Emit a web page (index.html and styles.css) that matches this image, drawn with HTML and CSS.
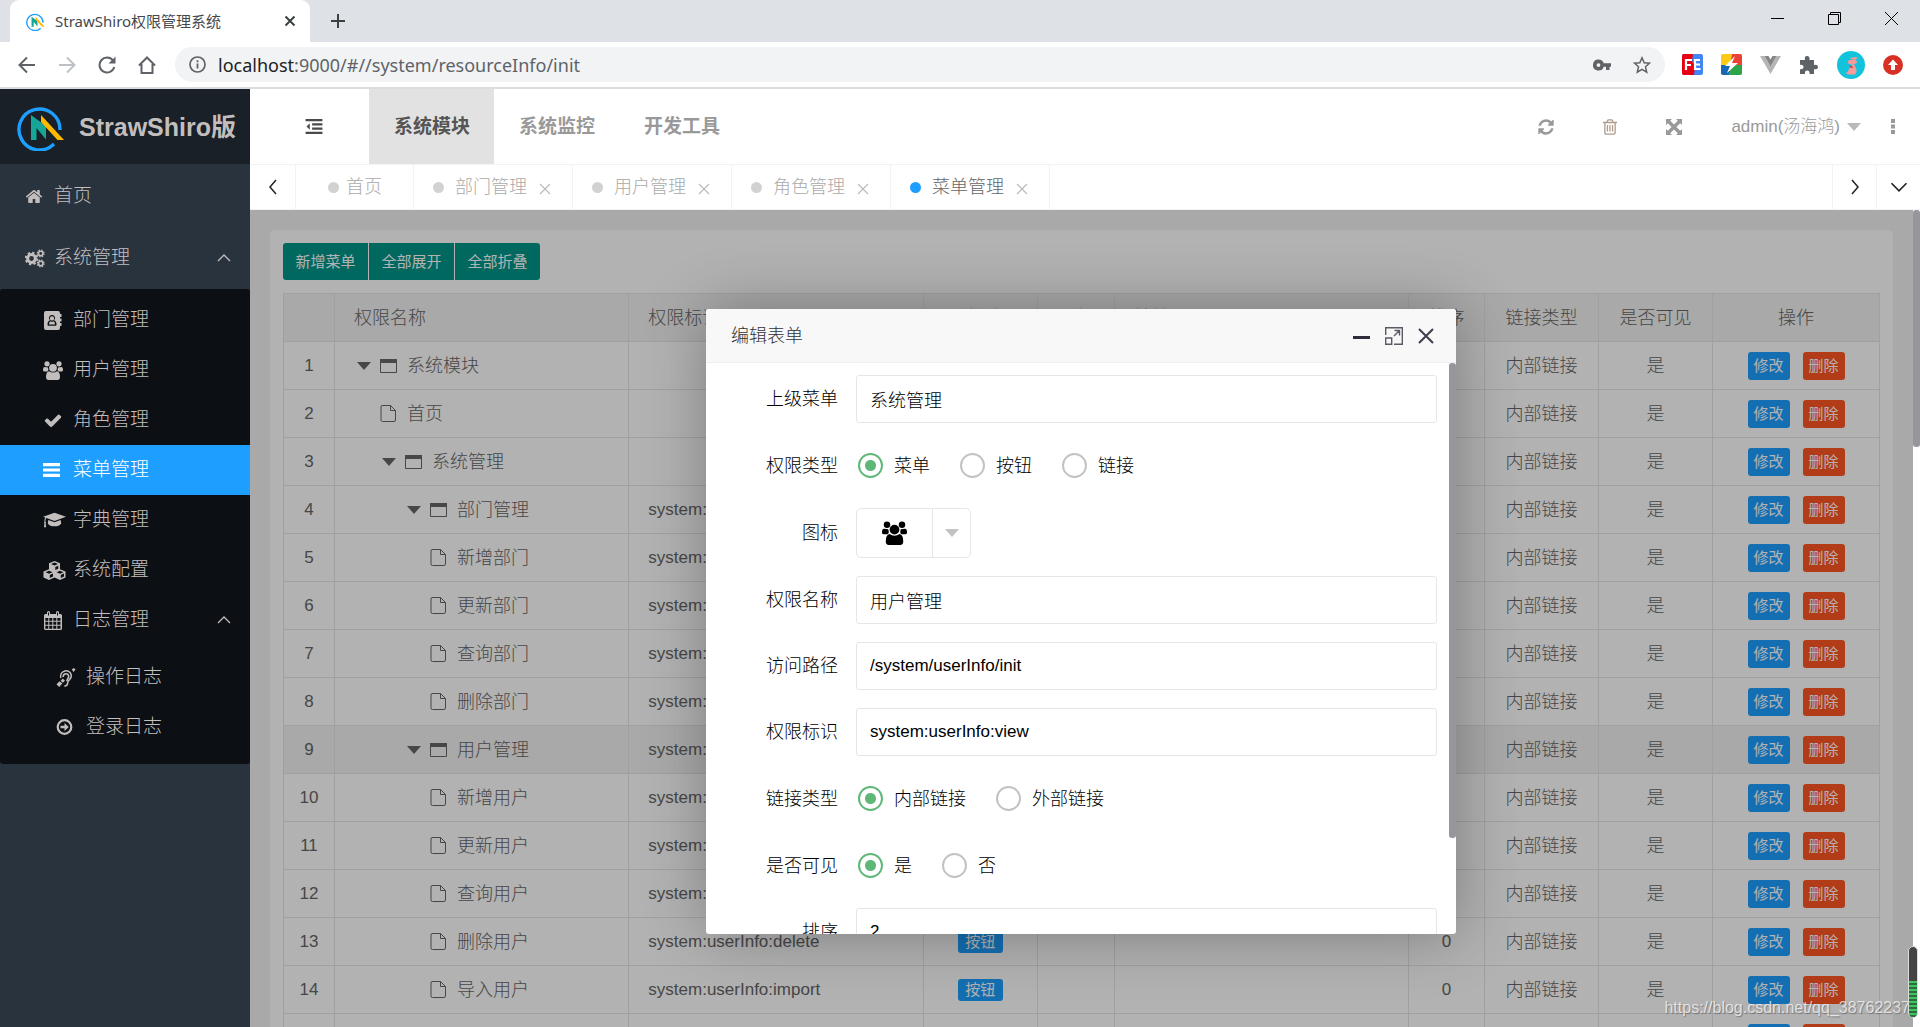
FILE: index.html
```html
<!DOCTYPE html>
<html lang="zh-CN">
<head>
<meta charset="utf-8">
<title>StrawShiro权限管理系统</title>
<link rel="stylesheet" href="styles.css">
</head>
<body>
<svg class="sprite" aria-hidden="true">
  <symbol id="logo" viewBox="0 0 48 48">
    <path d="M37 41A20.500 20.500 0 1 1 43 27" fill="none" stroke="#1e9fff" stroke-width="3.400"/>
    <path d="M14 12v25h5.500V25L29 36.500V23z" fill="#16a596"/>
    <path d="M24 12v7l16.500 18H47z" fill="#ffb800"/>
  </symbol>
  <symbol id="home" viewBox="0 0 1792 1792"><path d="M1472 992v480q0 26-19 45t-45 19h-384v-384h-256v384h-384q-26 0-45-19t-19-45v-480q0-1 .5-3t.5-3l575-474 575 474q1 2 1 6zm223-69l-62 74q-8 9-21 11h-3q-13 0-21-7l-692-577-692 577q-12 8-24 7-13-2-21-11l-62-74q-8-10-7-23.500t11-21.500l719-599q32-26 76-26t76 26l244 204v-195q0-14 9-23t23-9h192q14 0 23 9t9 23v408l219 182q10 8 11 21.500t-7 23.500z"/></symbol>
  <symbol id="check" viewBox="0 0 1792 1792"><path d="M1671 566q0 40-28 68l-724 724-136 136q-28 28-68 28t-68-28l-136-136-362-362q-28-28-28-68t28-68l136-136q28-28 68-28t68 28l294 295 656-657q28-28 68-28t68 28l136 136q28 28 28 68z"/></symbol>
  <symbol id="refresh" viewBox="0 0 1792 1792"><path d="M1639 1056q0 5-1 7-64 268-268 434.500t-478 166.500q-146 0-282.500-55t-243.500-157l-129 129q-19 19-45 19t-45-19-19-45v-448q0-26 19-45t45-19h448q26 0 45 19t19 45-19 45l-137 137q71 66 161 102t187 36q134 0 250-65t186-179q11-17 53-117 8-23 30-23h192q13 0 22.500 9.500t9.500 22.500zm25-800v448q0 26-19 45t-45 19h-448q-26 0-45-19t-19-45 19-45l138-138q-148-137-349-137-134 0-250 65t-186 179q-11 17-53 117-8 23-30 23h-199q-13 0-22.500-9.500t-9.500-22.500v-7q65-268 270-434.500t480-166.500q146 0 284 55.500t245 156.500l130-129q19-19 45-19t45 19 19 45z"/></symbol>
  <symbol id="trash" viewBox="0 0 1792 1792"><path d="M704 736v576q0 14-9 23t-23 9h-64q-14 0-23-9t-9-23v-576q0-14 9-23t23-9h64q14 0 23 9t9 23zm256 0v576q0 14-9 23t-23 9h-64q-14 0-23-9t-9-23v-576q0-14 9-23t23-9h64q14 0 23 9t9 23zm256 0v576q0 14-9 23t-23 9h-64q-14 0-23-9t-9-23v-576q0-14 9-23t23-9h64q14 0 23 9t9 23zm128 724v-948h-896v948q0 22 7 40.500t14.500 27 10.500 8.500h832q3 0 10.500-8.500t14.500-27 7-40.500zm-672-1076h448l-48-117q-7-9-17-11h-317q-10 2-17 11zm928 32v64q0 14-9 23t-23 9h-96v948q0 83-47 143.500t-113 60.500h-832q-66 0-113-58.500t-47-141.500v-952h-96q-14 0-23-9t-9-23v-64q0-14 9-23t23-9h309l70-167q15-37 54-63t79-26h320q40 0 79 26t54 63l70 167h309q14 0 23 9t9 23z"/></symbol>
  <symbol id="arrows" viewBox="0 0 16 16"><path d="M0 0h6L4.200 1.800 8 5.600l3.800-3.800L10 0h6v6l-1.800-1.800L10.400 8l3.800 3.800L16 10v6h-6l1.800-1.800L8 10.400l-3.800 3.800L6 16H0v-6l1.800 1.800L5.600 8 1.800 4.200 0 6z"/></symbol>
  <symbol id="outdent" viewBox="0 0 18 16"><path d="M0 0h18v2.500H0zM7 4.500h11V7H7zM7 9h11v2.500H7zM0 13.500h18V16H0zM4.500 4.500v7L1 8z"/></symbol>
  <symbol id="bars" viewBox="0 0 16 13"><path d="M0 0h16v3H0zM0 5h16v3H0zM0 10h16v3H0z"/></symbol>
  <symbol id="cogs" viewBox="0 0 20 18"><g fill="none" stroke="currentColor"><circle cx="6.500" cy="9" r="3.900" stroke-width="3"/><circle cx="6.500" cy="9" r="5.800" stroke-width="2" stroke-dasharray="2.300 2.255"/><circle cx="15.700" cy="4" r="2.200" stroke-width="1.600"/><circle cx="15.700" cy="4" r="3.400" stroke-width="1.200" stroke-dasharray="1.500 1.170"/><circle cx="15.700" cy="14" r="2.200" stroke-width="1.600"/><circle cx="15.700" cy="14" r="3.400" stroke-width="1.200" stroke-dasharray="1.500 1.170"/></g></symbol>
  <symbol id="book" viewBox="0 0 18 19"><path fill-rule="evenodd" d="M2 0h12q2 0 2 2v1h1.500v3H16v1.500h1.500v3H16V12h1.500v3H16v2q0 2-2 2H2q-2 0-2-2V2q0-2 2-2zm6 4a3 3 0 0 0-2 5.300C4 10 3.500 11.500 3.500 14q0 .8 1 .8h7q1 0 1-.8c0-2.500-.5-4-2.500-4.700A3 3 0 0 0 8 4zm0 1.200a2.200 2.200 0 1 1 0 4.400 2.200 2.200 0 0 1 0-4.400z"/><path d="M5 13.500q0-2.800 1.500-3.300 1.500 1 3 0 1.500.5 1.500 3.300z"/></symbol>
  <symbol id="users" viewBox="0 0 20 19"><circle cx="4" cy="2.800" r="2.600"/><circle cx="16" cy="2.800" r="2.600"/><path d="M1.500 6q-1.500 0-1.500 3 0 1.500 1.500 1.500h3Q6 9.500 5 6.500 3.500 6.300 1.500 6zM18.500 6Q20 6 20 9q0 1.500-1.500 1.500h-3Q14 9.500 15 6.500q1.500-.2 3.500-.5z"/><circle cx="10" cy="6.800" r="3.900"/><path d="M6 10.300q4 2.600 8 0 3 .7 3 5.700 0 3-2.500 3h-9Q3 19 3 16q0-5 3-5.700z"/></symbol>
  <symbol id="grad" viewBox="0 0 24 16"><path d="M12 0l12 4-12 4.500L3.500 5.300Q2.500 6 2.500 9q1 .8.300 1.800L3.300 15H1l.5-4.200Q.8 9.800 1.500 9q0-3 .8-4.200L0 4zM5.500 7.400L12 9.900l6.500-2.500L19 11q-2 3-7 3t-7-3z"/></symbol>
  <symbol id="cubes" viewBox="0 0 23 19"><path fill-rule="evenodd" d="M11.500 0L17 2.300v6l5.500 2.300v5.800L17 19l-5.500-2.400L6 19 .5 16.400v-5.800L6 8.300v-6zm0 1.600L8 3l3.500 1.500L15 3zM12.300 6v3l3-1.300V4.700zM6 9.800l-3.500 1.400L6 12.700l3.500-1.500zM6.800 14v3l3.200-1.400v-3zM17 9.800l-3.500 1.400 3.500 1.500 3.500-1.500zM17.800 14v3l3.200-1.400v-3z"/></symbol>
  <symbol id="calendar" viewBox="0 0 18 19"><path fill-rule="evenodd" d="M1.500 3H3V1.500Q3 0 4.500 0T6 1.500V3h6V1.500Q12 0 13.500 0T15 1.500V3h1.500Q18 3 18 4.500v13q0 1.500-1.500 1.500h-15Q0 19 0 17.500v-13Q0 3 1.500 3zM4 1.500v3h1v-3zm9 0v3h1v-3zM1.300 7v2.700h3V7zm4 0v2.700h3V7zm4 0v2.700h3V7zm4 0v2.700h3.200V7zm-12 3.700v3h3v-3zm4 0v3h3v-3zm4 0v3h3v-3zm4 0v3h3.200v-3zm-12 4v3h3v-3zm4 0v3h3v-3zm4 0v3h3v-3zm4 0v3h3.200v-3z"/></symbol>
  <symbol id="deaf" viewBox="0 0 18 18"><g fill="none" stroke="currentColor" stroke-width="1.500"><path d="M4 9.500C2.500 2 13 0 14 7c.5 4-3.500 4-3.500 7.500q0 2.500-3 2.700M6.300 8.500c0-4 5.200-4 5.200-.5 0 2-1.500 2-1.700 4.500"/></g><path d="M14.500 1.500L16.500 0 18 1.500l-2 2.200zM0 15.500l3-3 2.500 2.300L2.500 18zM4 12l2-2 2 2-2 2z"/></symbol>
  <symbol id="goto" viewBox="0 0 16 16"><circle cx="8" cy="8" r="6.800" fill="none" stroke="currentColor" stroke-width="2.200"/><path d="M4 6.700h4V4l4.300 4L8 12V9.300H4z"/></symbol>
  <symbol id="up" viewBox="0 0 14 8"><path d="M1 7l6-6 6 6" fill="none" stroke="currentColor" stroke-width="1.300"/></symbol>
  <symbol id="left" viewBox="0 0 8 16"><path d="M7 1L1 8l6 7" fill="none" stroke="currentColor" stroke-width="1.500"/></symbol>
  <symbol id="cross" viewBox="0 0 12 12"><path d="M1 1l10 10M11 1L1 11" fill="none" stroke="currentColor" stroke-width="1.200"/></symbol>
  <symbol id="caret" viewBox="0 0 14 8"><path d="M0 0h14L7 8z"/></symbol>
  <symbol id="win" viewBox="0 0 17 14"><path d="M.5.500h16v13H.5z" fill="none" stroke="currentColor"/><path d="M0 0h17v4H0z"/></symbol>
  <symbol id="doc" viewBox="0 0 17 17"><path d="M2 .5h8.500l5 5V15q0 1.500-1.500 1.500H2.500Q1 16.500 1 15V2Q1 .5 2 .5zM10.500.500v5h5" fill="none" stroke="currentColor"/></symbol>
</svg>

<header class="browser">
  <div class="tabstrip">
    <div class="browser-tab">
      <svg class="favicon"><use href="#logo"/></svg>
      <span class="browser-title">StrawShiro权限管理系统</span>
      <button class="plain" aria-label="关闭标签页"><svg width="12" height="12" viewBox="0 0 12 12"><path d="M1.500 1.500l9 9M10.500 1.500l-9 9" stroke="#3c4043" stroke-width="2"/></svg></button>
    </div>
    <button class="plain new-tab" aria-label="新标签页"><svg width="16" height="16" viewBox="0 0 16 16"><path d="M8 1v14M1 8h14" stroke="#3c4043" stroke-width="2"/></svg></button>
    <div class="window-buttons">
      <button class="plain" aria-label="最小化"><svg width="13" height="13" viewBox="0 0 13 13"><path d="M0 6.500h13" stroke="#000"/></svg></button>
      <button class="plain" aria-label="还原"><svg width="13" height="13" viewBox="0 0 13 13"><path d="M.5 2.500h10v10H.5zM2.500 2V.500h10v10H11" fill="none" stroke="#000"/></svg></button>
      <button class="plain" aria-label="关闭"><svg width="13" height="13" viewBox="0 0 13 13"><path d="M0 0l13 13M13 0L0 13" stroke="#000"/></svg></button>
    </div>
  </div>
  <div class="toolbar">
    <div class="nav-buttons">
      <button class="plain" aria-label="后退"><svg width="18" height="18" viewBox="0 0 18 18"><path d="M17 9H2M9 1.500L1.500 9 9 16.500" fill="none" stroke="#5f6368" stroke-width="2"/></svg></button>
      <button class="plain" aria-label="前进"><svg width="18" height="18" viewBox="0 0 18 18"><path d="M1 9h15M9 1.500L16.500 9 9 16.500" fill="none" stroke="#bdc1c6" stroke-width="2"/></svg></button>
      <button class="plain" aria-label="刷新"><svg width="18" height="18" viewBox="0 0 18 18"><path d="M15 4.500A7.500 7.500 0 1 0 16.300 11" fill="none" stroke="#5f6368" stroke-width="2"/><path d="M17.500.500v7h-7z" fill="#5f6368"/></svg></button>
      <button class="plain" aria-label="主页"><svg width="18" height="18" viewBox="0 0 18 18"><path d="M1 9.500L9 1.500l8 8M3.500 8v9h11V8" fill="none" stroke="#5f6368" stroke-width="2"/></svg></button>
    </div>
    <div class="address">
      <svg width="17" height="17" viewBox="0 0 17 17"><circle cx="8.500" cy="8.500" r="7.500" fill="none" stroke="#5f6368" stroke-width="1.700"/><path d="M7.600 7.500h1.800v5H7.600zM7.600 4.300h1.800v1.900H7.600z" fill="#5f6368"/></svg>
      <span class="url"><b>localhost</b>:9000/#//system/resourceInfo/init</span>
      <svg width="18" height="12" viewBox="0 0 18 12"><path fill="#5f6368" fill-rule="evenodd" d="M5.500.5a5.500 5.500 0 0 1 5.200 3.700H18v3.500h-1.500V11H13V7.700h-2.300A5.500 5.500 0 1 1 5.500.500zm0 3.700a1.900 1.900 0 1 0 0 3.800 1.900 1.900 0 0 0 0-3.800z"/></svg>
      <svg width="18" height="18" viewBox="0 0 18 18"><path d="M9 1.800l2.200 4.900 5.300.5-4 3.600 1.200 5.300L9 13.300l-4.700 2.800 1.200-5.300-4-3.600 5.300-.5z" fill="none" stroke="#5f6368" stroke-width="1.500"/></svg>
    </div>
    <div class="extensions">
      <svg width="21" height="21" viewBox="0 0 21 21"><rect width="21" height="21" rx="2" fill="#4285f4"/><path d="M2 0h9l-1 7 3 5-1 9H2q-2 0-2-2V2q0-2 2-2z" fill="#e60012"/><path d="M4 16V6h6M4 11h5M18 6h-5v9h5.500M13 10.500h5" fill="none" stroke="#fff" stroke-width="2.200"/></svg>
      <svg width="21" height="21" viewBox="0 0 21 21"><rect width="21" height="21" rx="2" fill="#fbc916"/><path d="M11 0h8q2 0 2 2v9H9z" fill="#ea4335"/><path d="M0 11h11l-3 10H2q-2 0-2-2z" fill="#1769b5"/><path d="M11 11h10v8q0 2-2 2H8z" fill="#2ca44a"/><path d="M14 2L4 12h5l-3 7 11-10h-6z" fill="#fff"/></svg>
      <svg width="21" height="18" viewBox="0 0 21 18"><path d="M0 0h4.500l6 10.500L16.500 0H21L10.500 18z" fill="#b5b5b5"/><path d="M4.500 0h4l2 3.500 2-3.500h4l-6 10.500z" fill="#858585"/></svg>
      <svg width="20" height="20" viewBox="0 0 20 20"><path d="M1 5h5q-1-4 2-4t2.500 4H15v5q4-.7 4 2t-4 2.300V19h-4.500q.5-3.500-2.300-3.500T6 19H1v-4.800q3.500.3 3.500-2.200T1 9.800z" fill="#5f6368"/></svg>
      <svg width="28" height="28" viewBox="0 0 28 28"><circle cx="14" cy="14" r="14" fill="#12c3dc"/><path d="M21 6q-6-.5-8.500 1.500L17 8.500q-6 0-6.500 2.500.5 2 3.500 2.500l2 .5q-4 2-4.500 5.500-1.500 2.500-3 2.500l2.500 1.500h7q3-3 0-8.500l-1-2q3-.5 3-2.500l-2-2 3.500-1-3-.3z" fill="#f69a9a"/><path d="M12 14.500l4.500 1.500-2.500 1z" fill="#a33"/></svg>
      <svg width="20" height="20" viewBox="0 0 20 20"><circle cx="10" cy="10" r="10" fill="#d93025"/><path d="M10 4.500L5 10h3v5h4v-5h3z" fill="#fff"/></svg>
    </div>
  </div>
</header>

<div class="app">
  <aside class="sidebar">
    <div class="brand"><svg width="48" height="48"><use href="#logo"/></svg><span>StrawShiro版</span></div>
    <nav>
      <a class="item" href="#home"><svg class="ico-home"><use href="#home"/></svg><span>首页</span></a>
      <a class="item" href="#sys"><svg><use href="#cogs"/></svg><span>系统管理</span><svg class="fold"><use href="#up"/></svg></a>
      <div class="submenu">
        <a class="item" href="#dept"><svg><use href="#book"/></svg><span>部门管理</span></a>
        <a class="item" href="#user"><svg><use href="#users"/></svg><span>用户管理</span></a>
        <a class="item" href="#role"><svg><use href="#check"/></svg><span>角色管理</span></a>
        <a class="item active" href="#menu"><svg class="ico-bars"><use href="#bars"/></svg><span>菜单管理</span></a>
        <a class="item" href="#dict"><svg class="ico-wide"><use href="#grad"/></svg><span>字典管理</span></a>
        <a class="item" href="#conf"><svg class="ico-wide"><use href="#cubes"/></svg><span>系统配置</span></a>
        <a class="item" href="#log"><svg><use href="#calendar"/></svg><span>日志管理</span><svg class="fold"><use href="#up"/></svg></a>
        <div class="submenu2">
          <a class="item" href="#op"><svg><use href="#deaf"/></svg><span>操作日志</span></a>
          <a class="item" href="#login"><svg class="ico-bars"><use href="#goto"/></svg><span>登录日志</span></a>
        </div>
      </div>
    </nav>
  </aside>

  <div class="main">
    <div class="topbar">
      <button class="plain collapse" aria-label="收起菜单"><svg width="18" height="15"><use href="#outdent"/></svg></button>
      <nav class="modules">
        <a class="on" href="#m1">系统模块</a><a href="#m2">系统监控</a><a href="#m3">开发工具</a>
      </nav>
      <div class="tools">
        <button class="plain tool" aria-label="刷新页面"><svg width="18" height="18"><use href="#refresh"/></svg></button>
        <button class="plain tool trash" aria-label="清除缓存"><svg width="18" height="18"><use href="#trash"/></svg></button>
        <button class="plain tool" aria-label="全屏"><svg width="16" height="16"><use href="#arrows"/></svg></button>
        <button class="plain account"><span>admin(汤海鸿)</span><svg width="14" height="8"><use href="#caret"/></svg></button>
        <button class="plain more" aria-label="更多"><svg width="4" height="15" viewBox="0 0 4 15"><path d="M0 0h4v4H0zM0 5.500h4v4H0zM0 11h4v4H0z"/></svg></button>
      </div>
    </div>
    <div class="pagetabs">
      <button class="plain end" aria-label="向左"><svg width="8" height="16"><use href="#left"/></svg></button>
      <a class="ptab first" href="#t1"><i></i><span>首页</span></a>
      <a class="ptab" href="#t2"><i></i><span>部门管理</span><svg><use href="#cross"/></svg></a>
      <a class="ptab" href="#t3"><i></i><span>用户管理</span><svg><use href="#cross"/></svg></a>
      <a class="ptab" href="#t4"><i></i><span>角色管理</span><svg><use href="#cross"/></svg></a>
      <a class="ptab current" href="#t5"><i></i><span>菜单管理</span><svg><use href="#cross"/></svg></a>
      <span class="spacer"></span>
      <button class="plain end" aria-label="向右"><svg class="flip" width="8" height="16"><use href="#left"/></svg></button>
      <button class="plain end" aria-label="页签操作"><svg class="flip" width="18" height="10"><use href="#up"/></svg></button>
    </div>

    <div class="frame">
      <div class="page">
        <div class="card">
          <div class="actions"><button>新增菜单</button><button>全部展开</button><button>全部折叠</button></div>
          <table>
            <colgroup><col class="c-no"><col><col><col class="c-type"><col class="c-icon"><col><col class="c-sort"><col class="c-link"><col class="c-link"><col class="c-ops"></colgroup>
            <thead><tr><th></th><th class="l">权限名称</th><th class="l">权限标识</th><th>类型</th><th>图标</th><th class="l">地址</th><th>排序</th><th>链接类型</th><th>是否可见</th><th>操作</th></tr></thead>
            <tbody>
              <tr><td>1</td><td class="name"><div><svg class="tri"><use href="#caret"/></svg><svg class="win"><use href="#win"/></svg>系统模块</div></td><td class="l"></td><td></td><td></td><td></td><td></td><td>内部链接</td><td>是</td><td class="ops"><button class="edit">修改</button><button class="del">删除</button></td></tr>
              <tr><td>2</td><td class="name leaf"><div><svg class="doc"><use href="#doc"/></svg>首页</div></td><td class="l"></td><td></td><td></td><td></td><td></td><td>内部链接</td><td>是</td><td class="ops"><button class="edit">修改</button><button class="del">删除</button></td></tr>
              <tr><td>3</td><td class="name d1"><div><svg class="tri"><use href="#caret"/></svg><svg class="win"><use href="#win"/></svg>系统管理</div></td><td class="l"></td><td></td><td></td><td></td><td></td><td>内部链接</td><td>是</td><td class="ops"><button class="edit">修改</button><button class="del">删除</button></td></tr>
              <tr><td>4</td><td class="name d2"><div><svg class="tri"><use href="#caret"/></svg><svg class="win"><use href="#win"/></svg>部门管理</div></td><td class="l">system:</td><td></td><td></td><td></td><td></td><td>内部链接</td><td>是</td><td class="ops"><button class="edit">修改</button><button class="del">删除</button></td></tr>
              <tr><td>5</td><td class="name leaf d2"><div><svg class="doc"><use href="#doc"/></svg>新增部门</div></td><td class="l">system:</td><td></td><td></td><td></td><td></td><td>内部链接</td><td>是</td><td class="ops"><button class="edit">修改</button><button class="del">删除</button></td></tr>
              <tr><td>6</td><td class="name leaf d2"><div><svg class="doc"><use href="#doc"/></svg>更新部门</div></td><td class="l">system:</td><td></td><td></td><td></td><td></td><td>内部链接</td><td>是</td><td class="ops"><button class="edit">修改</button><button class="del">删除</button></td></tr>
              <tr><td>7</td><td class="name leaf d2"><div><svg class="doc"><use href="#doc"/></svg>查询部门</div></td><td class="l">system:</td><td></td><td></td><td></td><td></td><td>内部链接</td><td>是</td><td class="ops"><button class="edit">修改</button><button class="del">删除</button></td></tr>
              <tr><td>8</td><td class="name leaf d2"><div><svg class="doc"><use href="#doc"/></svg>删除部门</div></td><td class="l">system:</td><td></td><td></td><td></td><td></td><td>内部链接</td><td>是</td><td class="ops"><button class="edit">修改</button><button class="del">删除</button></td></tr>
              <tr class="hover"><td>9</td><td class="name d2"><div><svg class="tri"><use href="#caret"/></svg><svg class="win"><use href="#win"/></svg>用户管理</div></td><td class="l">system:</td><td></td><td></td><td></td><td></td><td>内部链接</td><td>是</td><td class="ops"><button class="edit">修改</button><button class="del">删除</button></td></tr>
              <tr><td>10</td><td class="name leaf d2"><div><svg class="doc"><use href="#doc"/></svg>新增用户</div></td><td class="l">system:</td><td></td><td></td><td></td><td></td><td>内部链接</td><td>是</td><td class="ops"><button class="edit">修改</button><button class="del">删除</button></td></tr>
              <tr><td>11</td><td class="name leaf d2"><div><svg class="doc"><use href="#doc"/></svg>更新用户</div></td><td class="l">system:</td><td></td><td></td><td></td><td></td><td>内部链接</td><td>是</td><td class="ops"><button class="edit">修改</button><button class="del">删除</button></td></tr>
              <tr><td>12</td><td class="name leaf d2"><div><svg class="doc"><use href="#doc"/></svg>查询用户</div></td><td class="l">system:</td><td></td><td></td><td></td><td></td><td>内部链接</td><td>是</td><td class="ops"><button class="edit">修改</button><button class="del">删除</button></td></tr>
              <tr><td>13</td><td class="name leaf d2"><div><svg class="doc"><use href="#doc"/></svg>删除用户</div></td><td class="l">system:userInfo:delete</td><td><span class="badge">按钮</span></td><td></td><td></td><td>0</td><td>内部链接</td><td>是</td><td class="ops"><button class="edit">修改</button><button class="del">删除</button></td></tr>
              <tr><td>14</td><td class="name leaf d2"><div><svg class="doc"><use href="#doc"/></svg>导入用户</div></td><td class="l">system:userInfo:import</td><td><span class="badge">按钮</span></td><td></td><td></td><td>0</td><td>内部链接</td><td>是</td><td class="ops"><button class="edit">修改</button><button class="del">删除</button></td></tr>
              <tr><td></td><td></td><td></td><td></td><td></td><td></td><td></td><td></td><td></td><td class="ops"><button class="edit">修改</button><button class="del">删除</button></td></tr>
            </tbody>
          </table>
        </div>
        <div class="shade">
          <section class="dialog" role="dialog" aria-label="编辑表单">
            <div class="dialog-head">
              <h2>编辑表单</h2>
              <button class="plain" aria-label="最小化窗口"><svg width="17" height="18" viewBox="0 0 17 18"><path d="M0 10.500h17" stroke="#2e2d3c" stroke-width="3"/></svg></button>
              <button class="plain" aria-label="最大化窗口"><svg width="18" height="18" viewBox="0 0 18 18"><path d="M.7 8V.7h16.600v16.600H9M.7 11h6v6.300h-6zM9 9l5.500-5.500M9.500 3.500h5v5" fill="none" stroke="#5a5966" stroke-width="1.400"/></svg></button>
              <button class="plain" aria-label="关闭窗口"><svg width="16" height="16" viewBox="0 0 16 16"><path d="M1 1l14 14M15 1L1 15" stroke="#3e3d4c" stroke-width="2"/></svg></button>
            </div>
            <form class="dialog-body">
              <div class="row"><label for="f1">上级菜单</label><input id="f1" type="text" value="系统管理"></div>
              <div class="row choice"><span class="label">权限类型</span><label><input type="radio" name="type" checked>菜单</label><label><input type="radio" name="type">按钮</label><label><input type="radio" name="type">链接</label></div>
              <div class="row pick"><span class="label">图标</span><button type="button" class="picker" aria-label="选择图标"><span><svg width="25" height="24"><use href="#users"/></svg></span><span class="drop"><svg width="14" height="8"><use href="#caret"/></svg></span></button></div>
              <div class="row"><label for="f2">权限名称</label><input id="f2" type="text" value="用户管理"></div>
              <div class="row"><label for="f3">访问路径</label><input id="f3" type="text" value="/system/userInfo/init"></div>
              <div class="row"><label for="f4">权限标识</label><input id="f4" type="text" value="system:userInfo:view"></div>
              <div class="row choice"><span class="label">链接类型</span><label><input type="radio" name="link" checked>内部链接</label><label><input type="radio" name="link">外部链接</label></div>
              <div class="row choice"><span class="label">是否可见</span><label><input type="radio" name="show" checked>是</label><label><input type="radio" name="show">否</label></div>
              <div class="row"><label for="f5">排序</label><input id="f5" type="text" value="2"></div>
            </form>
            <div class="dialog-thumb"></div>
          </section>
        </div>
      </div>
      <div class="rail"><div class="thumb"></div></div>
    </div>
  </div>
</div>
<div class="watermark">https://blog.csdn.net/qq_38762237</div>
<div class="meter"><div></div></div>
</body>
</html>
```

FILE: styles.css
```css
* { box-sizing: border-box; }
body {
  margin: 0;
  height: 100vh;
  overflow: hidden;
  display: flex;
  flex-direction: column;
  position: relative;
  font: 300 18px/24px "Liberation Sans", "Noto Sans CJK SC", sans-serif;
  color: #666;
  background: #fff;
}
a { color: inherit; text-decoration: none; }
button, input { font: inherit; color: inherit; }
svg { display: block; flex: none; fill: currentColor; }
.sprite { position: absolute; width: 0; height: 0; }
.plain { border: 0; padding: 0; background: none; display: flex; align-items: center; justify-content: center; }

/* browser window */
.browser { flex: none; border-bottom: 2px solid #dadce0; font-family: "Noto Sans", "Noto Sans CJK SC", sans-serif; }
.tabstrip { height: 42px; background: #dee1e6; display: flex; padding-left: 10px; }
.browser-tab { width: 300px; height: 42px; padding: 0 14px 0 16px; background: #fff; border-radius: 9px 9px 0 0; display: flex; align-items: center; gap: 10px; }
.favicon { width: 19px; height: 19px; }
.browser-title { flex: 1; font-size: 15px; font-weight: 400; color: #45494d; white-space: nowrap; }
.new-tab { width: 56px; }
.window-buttons { margin-left: auto; display: flex; align-items: flex-start; }
.window-buttons .plain { width: 57px; height: 36px; }
.toolbar { height: 45px; display: flex; align-items: center; padding: 0 17px 0 18px; }
.nav-buttons { display: flex; gap: 22px; width: 157px; }
.address { flex: 1; height: 35px; border-radius: 18px; background: #f1f3f4; display: flex; align-items: center; gap: 22px; padding: 0 14px; }
.url { flex: 1; font-size: 18px; font-weight: 400; color: #5f6368; margin-left: -10px; }
.url b { font-weight: 400; color: #202124; }
.extensions { display: flex; align-items: center; gap: 18px; padding-left: 17px; }

/* application shell */
.app { flex: 1; min-height: 0; display: flex; }
.sidebar { width: 250px; flex: none; background: #28333e; color: #c2bebe; }
.brand { height: 75px; background: #192027; display: flex; align-items: center; gap: 14px; padding-left: 17px; font-size: 25px; font-weight: 700; white-space: nowrap; }
.sidebar nav { font-size: 19px; padding-top: 1px; }
.item { height: 62px; display: flex; align-items: center; gap: 9px; padding: 0 19px 0 25px; }
.item svg { width: 20px; height: 19px; }
.item .ico-home { width: 18px; }
.item .ico-home + span { margin-left: 2px; }
.item .fold { width: 14px; height: 8px; margin-left: auto; }
.submenu { background: #0c0f13; border-radius: 3px; padding: 6px 0; }
.submenu .item { height: 50px; padding-left: 43px; gap: 10px; }
.submenu .ico-bars { width: 17px; height: 16px; margin-right: 3px; }
.submenu .ico-wide { width: 23px; margin-right: -3px; }
.submenu .active { background: #1e9fff; color: #fff; }
.submenu2 { padding: 7px 0 6px; }
.submenu2 .item { padding-left: 56px; }
.main { flex: 1; min-width: 0; display: flex; flex-direction: column; }
.topbar { height: 75px; flex: none; display: flex; color: #999; }
.collapse { width: 119px; padding-left: 9px; color: #4a4a4a; }
.modules { display: flex; font-size: 19px; font-weight: 700; }
.modules a { padding: 0 24px 0 25px; line-height: 75px; }
.modules .on { background: #e2e2e2; color: #555; }
.tools { margin-left: auto; display: flex; }
.tool { width: 64px; }
.trash { color: #b09a8a; }
.account { gap: 7px; padding: 0 5px 0 25px; font-size: 17px; }
.account svg { color: #b9b9b9; }
.more { width: 54px; }
.pagetabs { flex: none; height: 46px; border-top: 1px solid #f2f2f2; border-bottom: 1px solid #f2f2f2; display: flex; color: #aaa; }
.end { width: 46px; color: #222; border-right: 1px solid #f2f2f2; }
.spacer { flex: 1; }
.spacer ~ .end { width: 44px; border-right: 0; border-left: 1px solid #f2f2f2; }
.flip { transform: rotate(180deg); }
.ptab { display: flex; align-items: center; gap: 11px; padding: 0 21px 0 19px; border-right: 1px solid #f2f2f2; }
.ptab.first { padding: 0 31px 0 32px; gap: 7px; }
.ptab i { width: 11px; height: 11px; border-radius: 50%; background: #d2d2d2; }
.ptab svg { width: 12px; height: 12px; margin: 4px 0 0 1px; color: #bbb; }
.current { color: #666; }
.current i { background: #1e9fff; }

/* framed page */
.frame { flex: 1; min-height: 0; display: flex; }
.page { flex: 1; min-width: 0; position: relative; overflow: hidden; background: #f2f2f2; padding: 20px; }
.rail { width: 7px; background: #fff; }
.thumb { height: 237px; border-radius: 3px; background: #96979c; }
.card { background: #fff; border-radius: 5px; padding: 13px; }
.actions { display: flex; gap: 1px; margin-bottom: 13px; }
.actions button { width: 85px; height: 37px; border: 0; padding: 0; background: #009688; color: #fff; font-size: 15px; font-weight: 400; }
.actions button:first-child { border-radius: 3px 0 0 3px; }
.actions button:last-child { border-radius: 0 3px 3px 0; }
table { width: 100%; table-layout: fixed; border-collapse: collapse; }
th, td { height: 48px; padding: 0; border: 1px solid #e6e6e6; font-weight: inherit; text-align: center; white-space: nowrap; }
th { background: #f2f2f2; }
td { font-size: 17px; }
td:nth-child(8), td:nth-child(9) { font-size: 18px; }
.l { text-align: left; padding-left: 19px; }
.c-no { width: 51px; }
.c-type { width: 114px; }
.c-icon { width: 77px; }
.c-sort { width: 76px; }
.c-link { width: 114px; }
.c-ops { width: 167px; }
.name { padding-left: 22px; font-size: 18px; }
.name.leaf { padding-left: 45px; }
.name.d1 { padding-left: 47px; }
.name.d2 { padding-left: 72px; }
.name.leaf.d2 { padding-left: 95px; }
.name div { display: flex; align-items: center; gap: 10px; }
.tri { width: 14px; height: 8px; margin-right: -1px; }
.win { width: 17px; height: 14px; }
.doc { width: 17px; height: 17px; }
.hover { background: #f2f2f2; }
.ops button { width: 42px; height: 28px; border: 0; padding: 0; border-radius: 3px; color: #fff; font-size: 15px; font-weight: 400; line-height: 28px; vertical-align: middle; }
.ops .edit { background: #1e9fff; margin-right: 13px; }
.ops .del { background: #ff5722; }
.badge { display: inline-block; width: 45px; height: 22px; border-radius: 3px; background: #1e9fff; color: #fff; font-size: 15px; font-weight: 400; line-height: 22px; vertical-align: middle; }
.shade { position: absolute; inset: 0; background: rgba(0, 0, 0, .3); display: flex; flex-direction: column; align-items: center; padding: 99px 1px 0 0; }

/* edit dialog */
.dialog { position: relative; width: 750px; height: 625px; border-radius: 3px; background: #fff; box-shadow: 1px 1px 62px rgba(0, 0, 0, .3); display: flex; flex-direction: column; color: #000; overflow: hidden; }
.dialog-head { flex: none; height: 54px; background: #f8f8f8; border-bottom: 1px solid #eee; display: flex; align-items: center; gap: 15px; padding: 0 22px 0 25px; color: #333; }
.dialog-head h2 { flex: 1; margin: 0; font-size: 18px; font-weight: inherit; }
.dialog-body { padding: 12px 19px 0 0; display: flex; flex-direction: column; gap: 18px; }
.row { height: 48px; display: flex; align-items: center; flex: none; }
.row > label:first-child, .label { width: 150px; padding-right: 18px; text-align: right; flex: none; }
.row > input { flex: 1; height: 48px; border: 1px solid #e6e6e6; border-radius: 3px; padding: 0 13px; font-size: 17px; background: #fff; }
#f1, #f2 { font-size: 18px; }
.choice { height: 49px; }
.choice label { display: flex; align-items: center; gap: 11px; margin-right: 30px; }
.choice input { appearance: none; width: 25px; height: 25px; margin: 0; border: 2px solid #c2c2c2; border-radius: 50%; }
.choice .label { width: 152px; padding-right: 20px; }
.choice input:checked { border-color: #5fb878; background: radial-gradient(circle, #5fb878 5px, #fff 6px); }
.pick { height: 50px; }
.picker { width: 115px; height: 50px; padding: 0; border: 1px solid #e6e6e6; border-radius: 5px; background: #fff; display: flex; }
.picker span { flex: 1; height: 48px; display: flex; align-items: center; justify-content: center; }
.picker .drop { flex: none; width: 38px; border-left: 1px solid #e6e6e6; color: #c2c2c2; }
.dialog-thumb { position: absolute; right: 0; top: 54px; width: 7px; height: 475px; border-radius: 3px; background: #96979c; }

/* overlays on the window corner */
.watermark { position: absolute; right: 10px; bottom: 7px; font-size: 16px; color: rgba(255, 255, 255, .7); text-shadow: 1px 1px 1px rgba(0, 0, 0, .3); }
.meter { position: absolute; right: 2px; bottom: 9px; width: 10px; height: 72px; border-radius: 5px; border: 1px solid #ddd; background: #444; overflow: hidden; display: flex; align-items: flex-end; }
.meter div { width: 100%; height: 36px; background: repeating-linear-gradient(#3fc463 0 2px, #2b6b3c 2px 4px); }
```
